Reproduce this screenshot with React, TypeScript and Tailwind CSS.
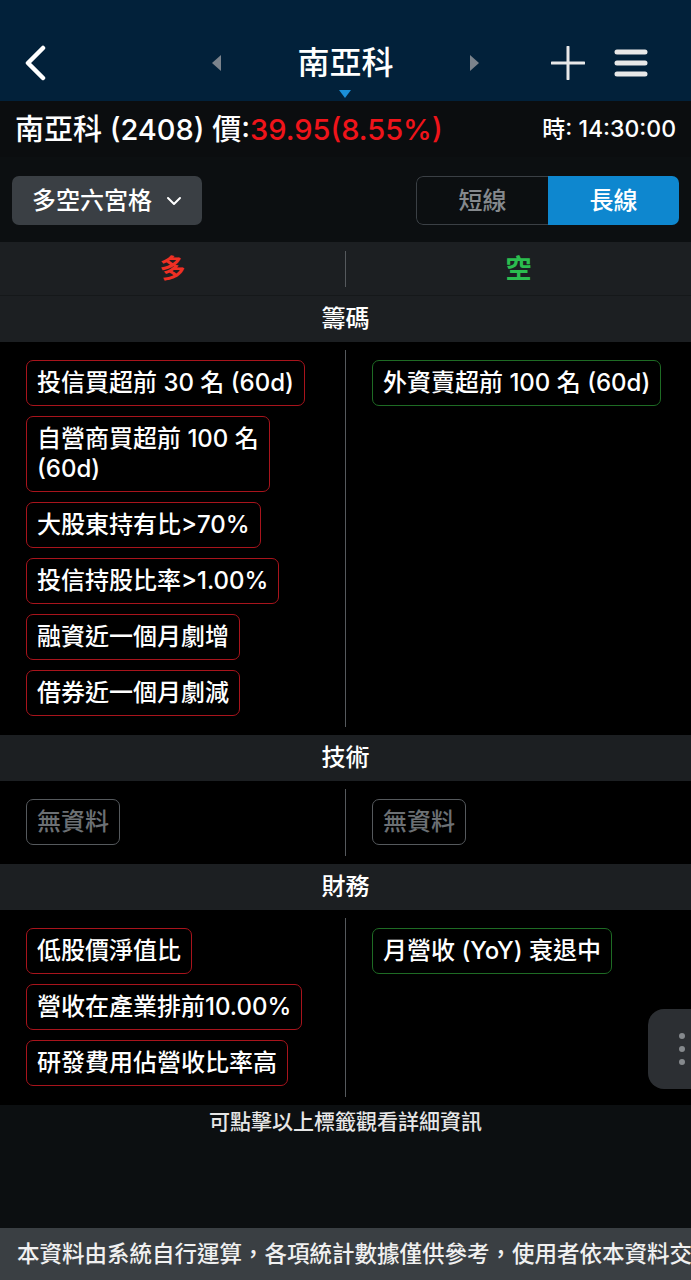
import React from "react";

type Tone = "bull" | "bear" | "none";

const Tag = ({ text, tone }: { text: React.ReactNode; tone: Tone }) => {
  const toneCls =
    tone === "bull"
      ? "border-[#a8141c] text-white"
      : tone === "bear"
      ? "border-[#1e6b24] text-white"
      : "border-[#55595d] text-[#6c7074]";
  return (
    <div
      className={`self-start rounded-[7px] border px-[10px] py-[7px] text-[24px] font-medium leading-[30px] ${toneCls}`}
    >
      {text}
    </div>
  );
};

type Item = { key: string; text: React.ReactNode; tone: Tone };

const Section = ({ title, bull, bear }: { title: string; bull: Item[]; bear: Item[] }) => (
  <>
    <div className="flex h-[46px] items-center justify-center bg-[#1c1f22] text-[24px] font-medium text-white">
      {title}
    </div>
    <div className="flex bg-black py-[8px]">
      <div className="flex flex-1 flex-col gap-[10px] pb-[11px] pl-[26px] pt-[10px]">
        {bull.map((t) => (
          <Tag key={t.key} text={t.text} tone={t.tone} />
        ))}
      </div>
      <div className="w-px bg-[#55595d]" />
      <div className="flex flex-1 flex-col gap-[10px] pb-[11px] pl-[26px] pt-[10px]">
        {bear.map((t) => (
          <Tag key={t.key} text={t.text} tone={t.tone} />
        ))}
      </div>
    </div>
  </>
);

const t = (text: string, tone: Tone): Item => ({ key: text, text, tone });

export default function App() {
  return (
    <div className="relative flex min-h-screen w-full flex-col overflow-hidden bg-[#0c0f11] font-['Inter','Noto_Sans_CJK_TC',sans-serif]">
      {/* nav header */}
      <header className="relative h-[101px] bg-[#02213a] pt-[24px]">
        <div className="grid h-[77px] grid-cols-[1fr_auto_1fr] items-center">
          <div className="flex items-center pl-[23px]">
            <svg width="24" height="36" viewBox="0 0 24 36" fill="none">
              <path d="M20 3 L5 18 L20 33" stroke="white" strokeWidth="4.5" strokeLinecap="round" strokeLinejoin="round" />
            </svg>
          </div>
          <div className="flex items-center gap-[76px]">
            <svg width="10" height="16" viewBox="0 0 10 16">
              <polygon points="10,0 10,16 1,8" fill="#7b838c" />
            </svg>
            <span className="text-[32px] font-medium leading-none text-white">南亞科</span>
            <svg width="10" height="16" viewBox="0 0 10 16">
              <polygon points="0,0 0,16 9,8" fill="#7b838c" />
            </svg>
          </div>
          <div className="flex items-center justify-end gap-[29px] pr-[43px]">
            <svg width="34" height="34" viewBox="0 0 34 34">
              <path d="M17 1 V33 M1 17 H33" stroke="#e8e8e8" strokeWidth="3" strokeLinecap="round" />
            </svg>
            <svg width="34" height="30" viewBox="0 0 34 30">
              <path d="M3 4 H31 M3 15 H31 M3 26 H31" stroke="#e8e8e8" strokeWidth="5" strokeLinecap="round" />
            </svg>
          </div>
        </div>
        <svg className="absolute left-[339px] top-[90px]" width="12" height="8" viewBox="0 0 12 8">
          <polygon points="0,0 12,0 6,8" fill="#1b8fd8" />
        </svg>
      </header>

      {/* quote bar */}
      <div className="flex h-[56px] items-center justify-between bg-[#0b0d0f] px-[15px]">
        <div className="text-[29px] font-medium leading-none text-white">
          南亞科 (2408) 價:<span className="text-[#f0141a]">39.95(8.55%)</span>
        </div>
        <div className="text-[23px] font-medium leading-none text-white">時: 14:30:00</div>
      </div>

      {/* toolbar */}
      <div className="flex h-[85px] items-center justify-between bg-[#0c0f11] px-[12px] pt-[2px]">
        <div className="flex h-[49px] w-[190px] items-center gap-[14px] rounded-[7px] bg-[#3a3f44] pl-[20px]">
          <span className="text-[24px] font-medium text-white">多空六宮格</span>
          <svg width="16" height="10" viewBox="0 0 16 10" fill="none">
            <path d="M2 2 L8 8 L14 2" stroke="white" strokeWidth="2" strokeLinecap="round" strokeLinejoin="round" />
          </svg>
        </div>
        <div className="flex h-[49px] w-[263px] overflow-hidden rounded-[7px]">
          <div className="flex flex-1 items-center justify-center rounded-l-[7px] border-[1.5px] border-r-0 border-[#3b4045] bg-[#0c0f11] text-[24px] font-medium text-[#85898d]">
            短線
          </div>
          <div className="flex flex-1 items-center justify-center bg-[#0e87cf] text-[24px] font-medium text-white">
            長線
          </div>
        </div>
      </div>

      {/* bull / bear header */}
      <div className="flex h-[54px] items-center border-b border-[#15181a] bg-[#1c1f22]">
        <div className="flex flex-1 justify-center text-[26px] font-bold text-[#ee3024]">多</div>
        <div className="h-[36px] w-px bg-[#55595d]" />
        <div className="flex flex-1 justify-center text-[26px] font-bold text-[#2bbd4f]">空</div>
      </div>

      <Section
        title="籌碼"
        bull={[
          t("投信買超前 30 名 (60d)", "bull"),
          {
            key: "self",
            text: (
              <>
                自營商買超前 100 名
                <br />
                (60d)
              </>
            ),
            tone: "bull",
          },
          t("大股東持有比>70%", "bull"),
          t("投信持股比率>1.00%", "bull"),
          t("融資近一個月劇增", "bull"),
          t("借券近一個月劇減", "bull"),
        ]}
        bear={[t("外資賣超前 100 名 (60d)", "bear")]}
      />
      <Section title="技術" bull={[t("無資料", "none")]} bear={[t("無資料", "none")]} />
      <Section
        title="財務"
        bull={[
          t("低股價淨值比", "bull"),
          t("營收在產業排前10.00%", "bull"),
          t("研發費用佔營收比率高", "bull"),
        ]}
        bear={[t("月營收 (YoY) 衰退中", "bear")]}
      />

      {/* hint */}
      <div className="flex flex-1 justify-center bg-[#0c0f11] pt-[3px] text-[21px] font-medium leading-[28px] text-[#e6e6e6]">
        可點擊以上標籤觀看詳細資訊
      </div>

      {/* disclaimer */}
      <div className="flex h-[52px] items-center overflow-hidden whitespace-nowrap bg-[#3a3f43] pl-[17px] text-[22.5px] font-medium text-[#f0f0f0]">
        本資料由系統自行運算，各項統計數據僅供參考，使用者依本資料交易，應自行承擔風險。
      </div>

      {/* floating handle */}
      <div className="absolute right-0 top-[1009px] flex h-[80px] w-[43px] flex-col items-end justify-center gap-[7px] rounded-l-[16px] bg-[#2c2f33] pr-[6px]">
        <span className="h-[6px] w-[6px] rounded-full bg-[#85898d]" />
        <span className="h-[6px] w-[6px] rounded-full bg-[#85898d]" />
        <span className="h-[6px] w-[6px] rounded-full bg-[#85898d]" />
      </div>
    </div>
  );
}
